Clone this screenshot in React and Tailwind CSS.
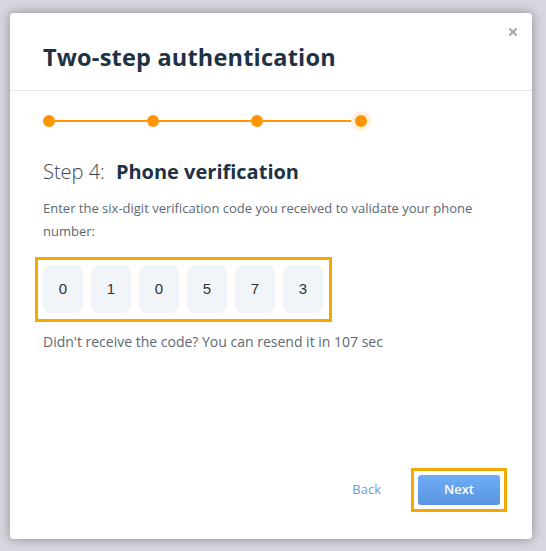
import { X } from 'lucide-react';

const digits = ['0', '1', '0', '5', '7', '3'];

function Stepper() {
  return (
    <div className="flex items-center h-5">
      {[0, 1, 2].map((i) => (
        <div key={i} className="flex items-center">
          <span className="w-3 h-3 rounded-full bg-[#ff9500]" />
          <span className="w-[92px] h-[2px] bg-[#ff9500]" />
        </div>
      ))}
      <span className="w-3 h-3 rounded-full bg-[#ff9500] ring-4 ring-[#fff1de]" />
    </div>
  );
}

export default function App() {
  return (
    <div
      className="w-[546px] h-[551px] bg-[#d8d6de] pt-[13px] pl-[10px]"
      style={{ fontFamily: '"Open Sans", sans-serif' }}
    >
      <div className="relative w-[522px] h-[526px] bg-white rounded-[4px] shadow-[0_0_12px_rgba(0,0,0,0.35)] flex flex-col">
        <button className="absolute top-[13px] right-[13px] text-[#a9a9a9]">
          <X size={12} strokeWidth={4} />
        </button>

        <div className="h-[78px] pt-[28px] pl-[33px] border-b border-[#e6e6e6]">
          <h1 className="text-[23.5px] leading-8 font-bold text-[#1e3244] tracking-[0.2px]">Two-step authentication</h1>
        </div>

        <div className="px-[33px] pt-5 flex-1 flex flex-col">
          <Stepper />

          <h2 className="mt-[26px] text-[20px] leading-[30px] text-[#1e3244]">
            <span className="font-light text-[#3b4653]">Step 4:</span>
            <span className="font-bold ml-[11px]">Phone verification</span>
          </h2>

          <p className="mt-[10px] text-[13px] leading-[23px] text-[#5d6873]">
            Enter the six-digit verification code you received to validate your phone number:
          </p>

          <div className="mt-[14px] -ml-[8px] self-start border-[3px] border-[#f6a800] pt-[5px] pb-[6px] pl-[5px] pr-[6px] flex gap-2">
            {digits.map((d, i) => (
              <div
                key={i}
                className="w-10 h-12 rounded-[8px] bg-[#f1f4f8] flex items-center justify-center text-[15px] text-[#333]"
                style={{ fontFamily: '"Liberation Sans", Arial, sans-serif' }}
              >
                {d}
              </div>
            ))}
          </div>

          <p className="mt-[10px] text-[14px] leading-5 text-[#5d6873]">
            Didn't receive the code? You can resend it in 107 sec
          </p>

          <div className="mt-auto mb-[27px] -mr-[8px] flex items-center justify-end">
            <button className="text-[13px] text-[#6e9cd2] mr-[30px]">Back</button>
            <div className="border-[3px] border-[#f6a800] p-1">
              <button className="w-[82px] h-[30px] rounded-[3px] bg-gradient-to-b from-[#6eaef7] to-[#5a94df] text-white text-[13px] font-semibold">
                Next
              </button>
            </div>
          </div>
        </div>
      </div>
    </div>
  );
}
